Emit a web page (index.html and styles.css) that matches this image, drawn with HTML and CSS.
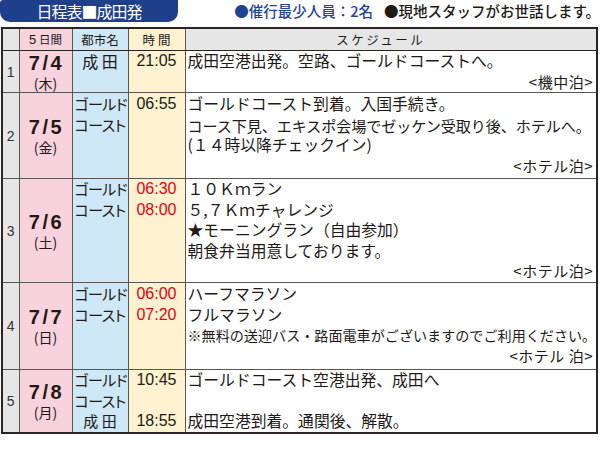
FILE: index.html
```html
<!DOCTYPE html>
<html lang="ja">
<head>
<meta charset="utf-8">
<link rel="stylesheet" href="styles.css">
</head>
<body>
<div class="page">
  <div class="top">
    <div class="pill">日程表■成田発</div>
    <div class="notes"><span class="blue">●催行最少人員：2名</span><span class="staff">●現地スタッフがお世話します。</span></div>
  </div>
  <table class="sched">
    <colgroup>
      <col class="c-no"><col class="c-date"><col class="c-city"><col class="c-time"><col class="c-plan">
    </colgroup>
    <thead>
      <tr class="r-head">
        <th class="no"></th>
        <th class="date"><span class="n">5</span> 日間</th>
        <th class="city">都市名</th>
        <th class="time">時 間</th>
        <th class="plan">スケジュール</th>
      </tr>
    </thead>
    <tbody>
      <tr class="r1">
        <td class="no">1</td>
        <td class="date"><div class="md">7/4</div><div class="wd">(木)</div></td>
        <td class="city center">成 田</td>
        <td class="time">21:05</td>
        <td class="plan"><div>成田空港出発。空路、ゴールドコーストへ。</div><div class="stay">&lt;機中泊&gt;</div></td>
      </tr>
      <tr class="r2">
        <td class="no">2</td>
        <td class="date"><div class="md">7/5</div><div class="wd">(金)</div></td>
        <td class="city"><div>ゴールド</div><div>コースト</div></td>
        <td class="time">06:55</td>
        <td class="plan"><div>ゴールドコースト到着。入国手続き。</div><div class="tight">コース下見、エキスポ会場でゼッケン受取り後、ホテルへ。</div><div>(１４時以降チェックイン)</div><div class="stay">&lt;ホテル泊&gt;</div></td>
      </tr>
      <tr class="r3">
        <td class="no">3</td>
        <td class="date"><div class="md">7/6</div><div class="wd">(土)</div></td>
        <td class="city"><div>ゴールド</div><div>コースト</div></td>
        <td class="time red"><div>06:30</div><div>08:00</div></td>
        <td class="plan"><div>１０Ｋｍラン</div><div>５,７Ｋｍチャレンジ</div><div>★モーニングラン（自由参加）</div><div>朝食弁当用意しております。</div><div class="stay">&lt;ホテル泊&gt;</div></td>
      </tr>
      <tr class="r4">
        <td class="no">4</td>
        <td class="date"><div class="md">7/7</div><div class="wd">(日)</div></td>
        <td class="city"><div>ゴールド</div><div>コースト</div></td>
        <td class="time red"><div>06:00</div><div>07:20</div></td>
        <td class="plan"><div>ハーフマラソン</div><div>フルマラソン</div><div class="note">※無料の送迎バス・路面電車がございますのでご利用ください。</div><div class="stay">&lt;ホテル 泊&gt;</div></td>
      </tr>
      <tr class="r5">
        <td class="no">5</td>
        <td class="date"><div class="md">7/8</div><div class="wd">(月)</div></td>
        <td class="city"><div>ゴールド</div><div>コースト</div><div class="center">成 田</div></td>
        <td class="time"><div>10:45</div><div>&nbsp;</div><div>18:55</div></td>
        <td class="plan"><div>ゴールドコースト空港出発、成田へ</div><div>&nbsp;</div><div>成田空港到着。通関後、解散。</div></td>
      </tr>
    </tbody>
  </table>
</div>
</body>
</html>
```

FILE: styles.css
```css
html, body {
  margin: 0;
  padding: 0;
  background: #ffffff;
}
body {
  font-family: "Noto Sans CJK JP", "Noto Sans", sans-serif;
  color: #231815;
}
.page {
  width: 600px;
  height: 455px;
}
.top {
  display: flex;
  align-items: center;
  height: 22px;
}
.pill {
  width: 178px;
  height: 22px;
  box-sizing: border-box;
  background: #1f3f8a;
  color: #ffffff;
  border-radius: 0 0 10px 10px;
  border-top-left-radius: 3px;
  font-size: 16px;
  line-height: 22px;
  text-align: center;
  letter-spacing: -1px;
  font-feature-settings: "palt";
}
.notes {
  flex: 1;
  display: flex;
  justify-content: flex-end;
  gap: 11px;
  padding-right: 0;
  font-size: 14.5px;
  line-height: 22px;
  font-weight: 500;
}
.blue {
  color: #1f4496;
}
.staff {
  color: #231815;
}
.sched {
  margin-top: 5px;
  margin-left: 1px;
  width: 597px;
  border-collapse: collapse;
  table-layout: fixed;
  border: 2px solid #2a2522;
}
.c-no { width: 17px; }
.c-date { width: 53px; }
.c-city { width: 56px; }
.c-time { width: 57px; }
.c-plan { width: auto; }
.sched th, .sched td {
  border: 1px solid #5a5654;
  padding: 0;
  vertical-align: top;
  font-weight: normal;
}
.sched th.no, .sched td.no {
  background: #e6e6e6;
}
.sched .date {
  background: #f8d3de;
}
.sched .city {
  background: #cfe8f7;
}
.sched .time {
  background: #fff2d0;
}
.sched th.plan {
  background: #e6e6e6;
}
.r-head th {
  height: 21px;
  font-size: 12.5px;
  line-height: 21px;
  text-align: center;
  vertical-align: middle;
  border-bottom: 1px solid #2a2522;
}
.r-head .n {
  font-family: "Liberation Sans", sans-serif;
  font-size: 13px;
}
.r-head th.date {
  font-size: 11.5px;
}
.r-head th.plan {
  letter-spacing: 2.5px;
  padding-right: 20px;
}
.r1 td { height: 40px; }
.r2 td { height: 84px; }
.r3 td { height: 103px; }
.r4 td { height: 85px; }
.r5 td { height: 62px; }
td.no {
  vertical-align: middle;
  text-align: center;
  font-family: "Liberation Sans", sans-serif;
  font-size: 14px;
  color: #333;
}
td.date {
  vertical-align: middle;
  text-align: center;
}
.md {
  font-family: "Liberation Sans", sans-serif;
  font-weight: bold;
  font-size: 20px;
  line-height: 22px;
  letter-spacing: 2.5px;
  padding-left: 2px;
}
.wd {
  font-size: 14px;
  line-height: 18px;
}
td.city {
  font-size: 15px;
  line-height: 20.5px;
  padding: 0 0 0 2px;
  font-feature-settings: "palt";
  letter-spacing: -0.5px;
  white-space: nowrap;
}
td.city.center, .city .center {
  text-align: center;
  letter-spacing: 0;
  padding-left: 0;
}
.r1 td.city.center {
  font-size: 16px;
}
.city .center {
  margin-left: -2px;
}
td.time {
  font-family: "Liberation Sans", sans-serif;
  font-size: 16px;
  line-height: 20.5px;
  text-align: center;
  padding-top: 0;
}
td.time.red {
  color: #e60012;
}
td.plan {
  font-size: 15.8px;
  line-height: 20.5px;
  padding: 0 2px 0 2px;
  white-space: nowrap;
}
.r2 td.plan, .r2 td.time, .r2 td.city,
.r4 td.plan, .r4 td.time, .r4 td.city {
  padding-top: 1px;
}
.plan .tight {
  font-size: 15.1px;
  letter-spacing: -0.1px;
}
.plan .note {
  font-size: 14.1px;
}
.plan .stay {
  text-align: right;
  font-size: 15px;
  letter-spacing: 0.5px;
  padding-right: 1px;
}
```
